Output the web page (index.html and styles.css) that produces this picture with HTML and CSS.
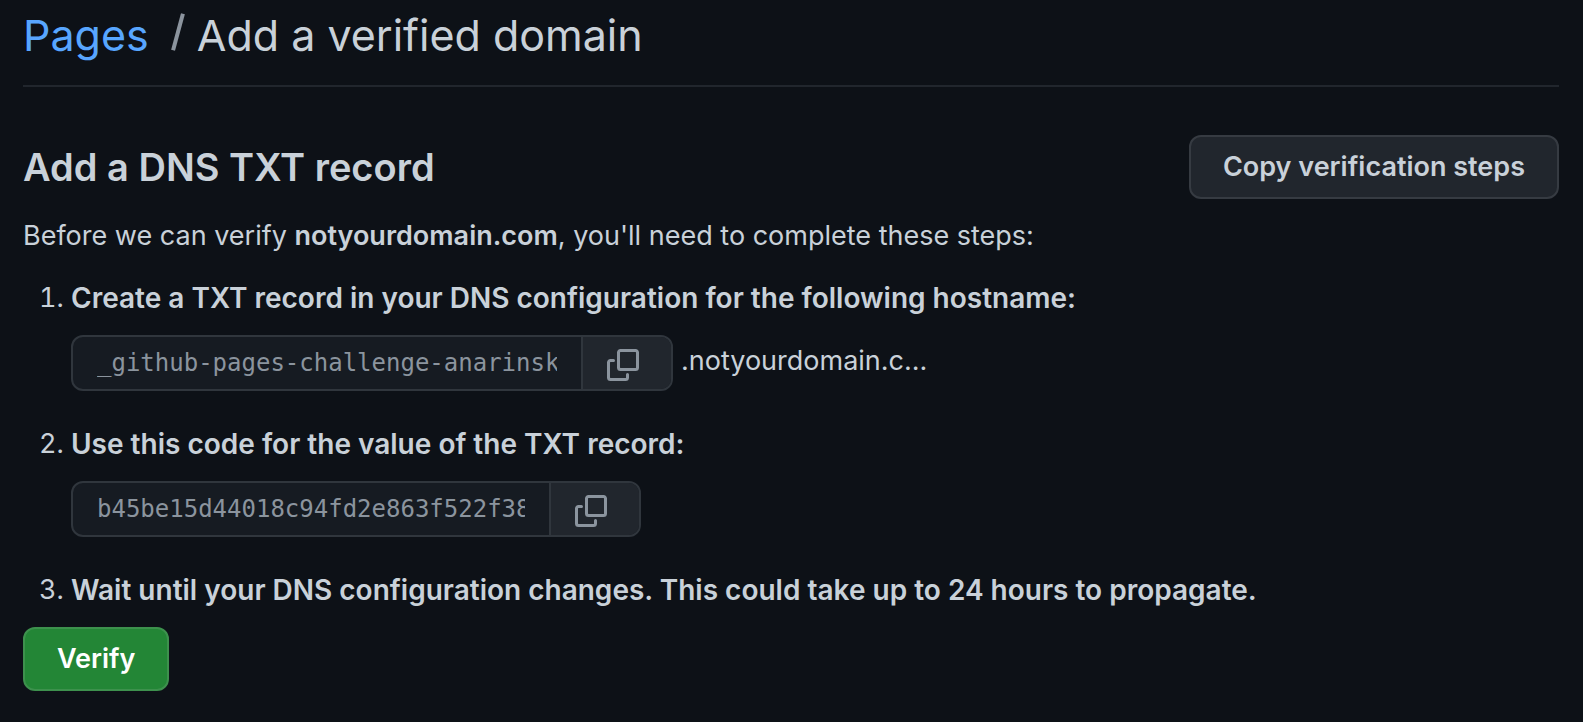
FILE: index.html
```html
<!DOCTYPE html>
<html lang="en">
<head>
<meta charset="utf-8">
<meta name="viewport" content="width=device-width, initial-scale=1">
<title>Add a verified domain</title>
<link rel="stylesheet" href="styles.css">
</head>
<body>
<svg class="sprite" aria-hidden="true">
  <symbol id="copy" viewBox="0 0 16 16">
    <path d="M0 6.75C0 5.784.784 5 1.75 5h1.5a.75.75 0 010 1.5h-1.5a.25.25 0 00-.25.25v7.5c0 .138.112.25.25.25h7.5a.25.25 0 00.25-.25v-1.5a.75.75 0 011.5 0v1.5A1.75 1.75 0 019.25 16h-7.5A1.75 1.75 0 010 14.25v-7.5z"/>
    <path fill-rule="evenodd" d="M5 1.75C5 .784 5.784 0 6.75 0h7.5C15.216 0 16 .784 16 1.75v7.5A1.75 1.75 0 0114.25 11h-7.5A1.75 1.75 0 015 9.25v-7.5zm1.75-.25a.25.25 0 00-.25.25v7.5c0 .138.112.25.25.25h7.5a.25.25 0 00.25-.25v-7.5a.25.25 0 00-.25-.25h-7.5z"/>
  </symbol>
</svg>
<main class="page">
  <h1 class="breadcrumb">
    <a class="breadcrumb-link" href="#">Pages</a>
    <span class="breadcrumb-slash" aria-hidden="true"></span>
    <span>Add a verified domain</span>
  </h1>
  <div class="subhead">
    <h2 class="subhead-title">Add a DNS TXT record</h2>
    <button class="btn" type="button">Copy verification steps</button>
  </div>
  <p class="intro">Before we can verify <strong>notyourdomain.com</strong>, you'll need to complete these steps:</p>
  <form class="form">
    <ol class="steps">
      <li>
        <label class="step-label" for="hostname">Create a TXT record in your DNS configuration for the following hostname:</label>
        <div class="field-row">
          <div class="field">
            <input class="field-input field-input-host" id="hostname" type="text" value="_github-pages-challenge-anarinsk" readonly>
            <button class="field-copy" type="button" aria-label="Copy hostname"><svg class="icon" aria-hidden="true"><use href="#copy"/></svg></button>
          </div>
          <span>.notyourdomain.c...</span>
        </div>
      </li>
      <li>
        <label class="step-label" for="code">Use this code for the value of the TXT record:</label>
        <div class="field-row">
          <div class="field">
            <input class="field-input field-input-code" id="code" type="text" value="b45be15d44018c94fd2e863f522f38" readonly>
            <button class="field-copy" type="button" aria-label="Copy code"><svg class="icon" aria-hidden="true"><use href="#copy"/></svg></button>
          </div>
        </div>
      </li>
      <li><span class="step-label">Wait until your DNS configuration changes. This could take up to 24 hours to propagate.</span></li>
    </ol>
    <button class="btn btn-primary" type="button">Verify</button>
  </form>
</main>
</body>
</html>
```
FILE: styles.css
```css
* { box-sizing: border-box; }

body {
  margin: 0;
  background: #0d1117;
  color: #c9d1d9;
  font: 400 27px/42px Inter, "Liberation Sans", sans-serif;
}

.sprite { display: none; }

.page { padding: 0 24px 24px 23px; }

.breadcrumb {
  display: flex;
  align-items: center;
  margin: 0;
  padding-bottom: 15px;
  border-bottom: 2px solid #21262d;
  font-size: 43px;
  font-weight: 400;
  line-height: 70px;
}
.breadcrumb-link { color: #58a6ff; text-decoration: none; }
.breadcrumb-slash {
  width: 4px;
  height: 38px;
  margin: 0 17px 6px 27px;
  background: #8b949e;
  transform: rotate(15deg);
}

.subhead {
  display: flex;
  align-items: center;
  justify-content: space-between;
  gap: 24px;
  margin: 48px 0 16px;
}
.subhead-title { margin: 0; font-size: 38px; font-weight: 600; line-height: 60px; }

.btn {
  height: 64px;
  padding: 0 32px;
  border: 2px solid #363b42;
  border-radius: 12px;
  background: #21262d;
  color: #c9d1d9;
  font: inherit;
  font-weight: 600;
}
.btn-primary { border-color: #3d914d; background: #238636; color: #fff; }

.intro { margin: 0 0 20px; }
strong { font-weight: 600; }

.steps {
  display: flex;
  flex-direction: column;
  gap: 32px;
  margin: 0 0 16px;
  padding-left: 48px;
}
.step-label { display: inline-block; font-size: 28px; font-weight: 600; vertical-align: top; }

.field-row { display: flex; gap: 8px; margin-top: 16px; line-height: 52px; }
.field {
  display: flex;
  height: 56px;
  border: 2px solid #30363d;
  border-radius: 12px;
  background: #161b22;
  overflow: hidden;
}
.field-input {
  padding: 0 24px;
  border: 0;
  background: none;
  color: #8b949e;
  font: 24px "DejaVu Sans Mono", monospace;
}
.field-input-host { width: 508px; }
.field-input-code { width: 476px; }
.field-copy {
  display: flex;
  width: 90px;
  padding: 12px 0 0 24px;
  border: 0;
  border-left: 2px solid #30363d;
  background: #21262d;
  color: #8b949e;
}
.icon { width: 32px; height: 32px; fill: currentColor; }
```
